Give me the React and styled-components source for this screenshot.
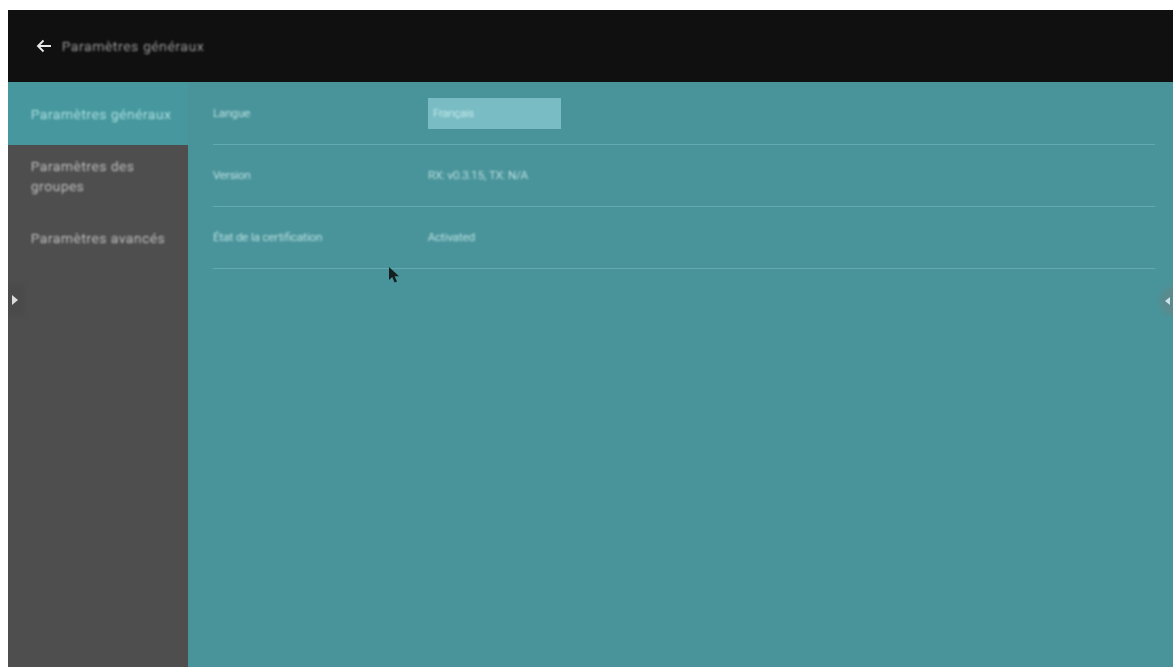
import styled, { createGlobalStyle } from "styled-components";

const GlobalStyle = createGlobalStyle`
  html, body {
    margin: 0;
    height: 100%;
    background: #fff;
    overflow: hidden;
  }
  #root {
    height: 100%;
  }
`;

// white edge around the captured video frame
const Frame = styled.div`
  box-sizing: border-box;
  height: 667px;
  padding: 10px 0 0 8px;
  font-family: Roboto, "Liberation Sans", sans-serif;
  font-weight: 300;
`;

const Screen = styled.div`
  position: relative;
  height: 100%;
  display: flex;
  flex-direction: column;
  overflow: hidden;
  background: #49949a;
`;

const Header = styled.header`
  flex: 0 0 72px;
  display: flex;
  align-items: center;
  gap: 9px;
  padding-left: 27px;
  background: #101010;
  color: #d4d4d4;
  font-size: 13.5px;
  letter-spacing: 0.85px;
`;

const BackIcon = styled.svg`
  width: 18px;
  height: 18px;
  color: #e8e8e8;
  filter: blur(0.5px);
`;

const HeaderTitle = styled.span`
  filter: blur(0.8px);
`;

const Body = styled.div`
  flex: 1;
  display: flex;
  min-height: 0;
`;

const Sidebar = styled.nav`
  flex: 0 0 180px;
  display: flex;
  flex-direction: column;
  background: #4e4e4e;
`;

const NavItem = styled.div`
  box-sizing: border-box;
  display: flex;
  align-items: center;
  height: ${(p) => p.$height}px;
  padding: 0 12px 0 23px;
  background: ${(p) => (p.$active ? "#46989e" : "transparent")};
  color: ${(p) => (p.$active ? "#d8fbfc" : "#ececec")};
  font-size: 13.5px;
  line-height: 20px;
  letter-spacing: 0.75px;
`;

const NavText = styled.span`
  filter: blur(0.8px);
`;

const Content = styled.main`
  flex: 1;
  padding: 1px 18px 0 25px;
`;

const Row = styled.div`
  box-sizing: border-box;
  display: flex;
  align-items: center;
  height: 62px;
  padding-bottom: 1px;
  border-bottom: 1px solid #62aab0;
  color: #e8ffff;
  font-size: 11.5px;
`;

const RowLabel = styled.div`
  flex: 0 0 215px;
  filter: blur(0.8px);
`;

const RowValue = styled.div`
  filter: blur(0.8px);
`;

const SelectBox = styled.div`
  box-sizing: border-box;
  display: flex;
  align-items: center;
  width: 133px;
  height: 31px;
  padding-left: 5px;
  background: #79bcc3;
  color: #e4ffff;
  font-size: 11px;
`;

const SelectText = styled.span`
  filter: blur(0.8px);
`;

const Pointer = styled.svg`
  position: absolute;
  left: 380px;
  top: 256px;
  width: 13px;
  height: 19px;
  filter: blur(0.6px);
`;

const LeftHandle = styled.div`
  position: absolute;
  left: 0;
  top: 275px;
  width: 16px;
  height: 30px;
  background: #4a4a4a;
  filter: blur(2px);
`;

const LeftArrow = styled.svg`
  position: absolute;
  left: 4px;
  top: 285px;
  width: 6px;
  height: 10px;
  filter: blur(0.5px);
`;

const RightHandle = styled.div`
  position: absolute;
  right: -13px;
  top: 277px;
  width: 26px;
  height: 28px;
  border-radius: 50%;
  background: #5a8a8e;
  filter: blur(2px);
`;

const RightArrow = styled.svg`
  position: absolute;
  right: 3px;
  top: 287px;
  width: 5px;
  height: 8px;
  filter: blur(0.5px);
`;

const rows = [
  { label: "Langue", select: "Français" },
  { label: "Version", value: "RX: v0.3.15, TX: N/A" },
  { label: "État de la certification", value: "Activated" },
];

export default function App() {
  return (
    <>
      <GlobalStyle />
      <Frame>
        <Screen>
          <Header>
            <BackIcon viewBox="0 0 18 18" fill="none" stroke="currentColor" strokeWidth="1.9">
              <path d="M16 9H3M8.5 3.5L3 9l5.5 5.5" />
            </BackIcon>
            <HeaderTitle>Paramètres généraux</HeaderTitle>
          </Header>
          <Body>
            <Sidebar>
              <NavItem $active $height={63}>
                <NavText>Paramètres généraux</NavText>
              </NavItem>
              <NavItem $height={62}>
                <NavText>
                  Paramètres des
                  <br />
                  groupes
                </NavText>
              </NavItem>
              <NavItem $height={62}>
                <NavText>Paramètres avancés</NavText>
              </NavItem>
            </Sidebar>
            <Content>
              {rows.map((row) => (
                <Row key={row.label}>
                  <RowLabel>{row.label}</RowLabel>
                  {row.select ? (
                    <SelectBox>
                      <SelectText>{row.select}</SelectText>
                    </SelectBox>
                  ) : (
                    <RowValue>{row.value}</RowValue>
                  )}
                </Row>
              ))}
            </Content>
          </Body>
          <Pointer viewBox="0 0 13 19">
            <path d="M1 1v13l3.2-3 2.4 5.5 2.4-1-2.4-5.3H11z" fill="#14201f" />
          </Pointer>
          <LeftHandle />
          <LeftArrow viewBox="0 0 6 10">
            <path d="M0 0l6 5-6 5z" fill="#dcdcdc" />
          </LeftArrow>
          <RightHandle />
          <RightArrow viewBox="0 0 5 8">
            <path d="M5 0L0 4l5 4z" fill="#c8e4e6" />
          </RightArrow>
        </Screen>
      </Frame>
    </>
  );
}
